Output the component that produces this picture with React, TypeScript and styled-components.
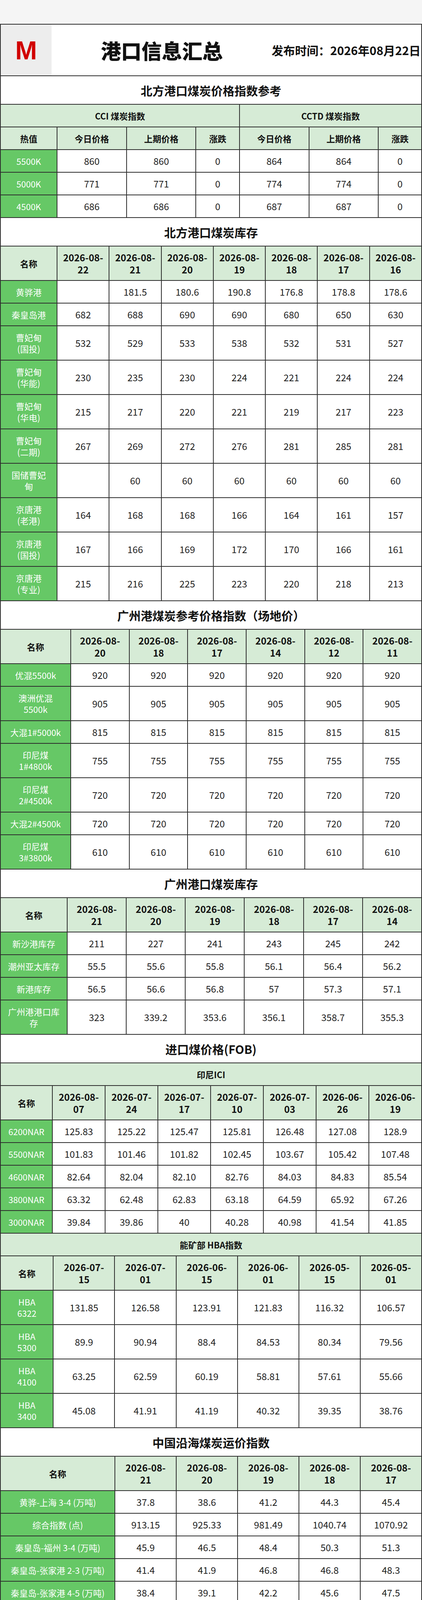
import React from "react";
import styled, { createGlobalStyle, css } from "styled-components";

const GlobalStyle = createGlobalStyle`
  html, body {
    margin: 0;
    background: #f5f5f5;
  }
  body {
    font-family: "Noto Sans CJK SC", "Noto Sans", sans-serif;
    color: #1a1a1a;
  }
`;

const Page = styled.div`
  padding: 61px 0;
`;

const Sheet = styled.div`
  display: flex;
  flex-direction: column;
  gap: 2px;
  padding: 2px;
  background: #2e2e2e;
`;

const Header = styled.header`
  display: flex;
  align-items: center;
  height: 130px;
  background: #fff;
  overflow: hidden;
  white-space: nowrap;
`;

const Logo = styled.div`
  display: flex;
  align-items: center;
  justify-content: center;
  flex: none;
  width: 130px;
  height: 100%;
  background: #ededed;
  color: #d10000;
  font: 700 67px "Liberation Sans", Arial, sans-serif;
`;

const MainTitle = styled.h1`
  margin: 0 0 0 126px;
  font-size: 52px;
  font-weight: 900;
  color: #111;
`;

const PublishDate = styled.div`
  margin-left: 125px;
  font-size: 30px;
  font-weight: 700;
  color: #111;
`;

const SectionTitle = styled.h2`
  display: flex;
  align-items: center;
  justify-content: center;
  height: 71px;
  margin: 0;
  background: #fff;
  font-size: 30px;
  font-weight: 700;
  color: #111;
`;

const SectionBar = styled.div`
  display: flex;
  height: 71px;
  background: #fff;
  overflow: hidden;
`;

const SectionText = styled(SectionTitle)`
  flex: 1;
`;

const SourceNote = styled.span`
  align-self: flex-start;
  margin-top: 3px;
  font-size: 17px;
  line-height: 1.2;
  color: #666;
  white-space: nowrap;
`;

const Grid = styled.div<{ $cols: string }>`
  display: grid;
  grid-template-columns: ${(p) => p.$cols};
  gap: 2px;
`;

type Tone = "head" | "date" | "name" | "data";

const tones = {
  head: css`
    background: #d6ebd6;
    font-size: 22px;
    font-weight: 700;
    color: #111;
  `,
  date: css`
    background: #d6ebd6;
    font-size: 24px;
    font-weight: 700;
    color: #111;
  `,
  name: css`
    background: #66c866;
    font-size: 22px;
    color: #fff;
    padding: 0 4px;
  `,
  data: css`
    background: #fff;
    font-size: 24px;
    color: #1f1f1f;
  `,
};

const Cell = styled.div<{ $tone: Tone; $tall?: boolean; $span?: number }>`
  display: flex;
  align-items: center;
  justify-content: center;
  min-width: 0;
  height: ${(p) => (p.$tall ? 86 : 56)}px;
  overflow: hidden;
  text-align: center;
  line-height: 1.3;
  white-space: pre-line;
  grid-column: ${(p) => (p.$span ? `span ${p.$span}` : "auto")};
  ${(p) => tones[p.$tone]}
`;

const Footnote = styled.div`
  height: 56px;
  padding: 0 18px;
  background: #66c866;
  color: #fff;
  font-size: 20px;
  line-height: 28px;
  text-align: center;
  overflow: hidden;
`;

type Row = { name: string; values: (string | number)[] };

type TableProps = {
  cols: string;
  dates: string[];
  rows: Row[];
  wrap?: boolean;
  band?: string;
};

const DataTable = ({ cols, dates, rows, wrap = true, band }: TableProps) => (
  <Grid $cols={cols}>
    {band && (
      <Cell $tone="head" $span={dates.length + 1}>
        {band}
      </Cell>
    )}
    <Cell $tone="head" $tall={wrap}>
      名称
    </Cell>
    {dates.map((d) => (
      <Cell key={d} $tone="date" $tall={wrap}>
        {wrap ? d.replace(/-(\d+)$/, "-\n$1") : d}
      </Cell>
    ))}
    {rows.map((r) => {
      const tall = r.name.includes("\n");
      return (
        <React.Fragment key={r.name}>
          <Cell $tone="name" $tall={tall}>
            {r.name}
          </Cell>
          {r.values.map((v, i) => (
            <Cell key={i} $tone="data" $tall={tall}>
              {v}
            </Cell>
          ))}
        </React.Fragment>
      );
    })}
  </Grid>
);

const cci = [
  ["5500K", 860, 860, 0, 864, 864, 0],
  ["5000K", 771, 771, 0, 774, 774, 0],
  ["4500K", 686, 686, 0, 687, 687, 0],
];

const northStock: Row[] = [
  { name: "黄骅港", values: ["", 181.5, 180.6, 190.8, 176.8, 178.8, 178.6] },
  { name: "秦皇岛港", values: [682, 688, 690, 690, 680, 650, 630] },
  { name: "曹妃甸\n(国投)", values: [532, 529, 533, 538, 532, 531, 527] },
  { name: "曹妃甸\n(华能)", values: [230, 235, 230, 224, 221, 224, 224] },
  { name: "曹妃甸\n(华电)", values: [215, 217, 220, 221, 219, 217, 223] },
  { name: "曹妃甸\n(二期)", values: [267, 269, 272, 276, 281, 285, 281] },
  { name: "国储曹妃\n甸", values: ["", 60, 60, 60, 60, 60, 60] },
  { name: "京唐港\n(老港)", values: [164, 168, 168, 166, 164, 161, 157] },
  { name: "京唐港\n(国投)", values: [167, 166, 169, 172, 170, 166, 161] },
  { name: "京唐港\n(专业)", values: [215, 216, 225, 223, 220, 218, 213] },
];

const six = (v: number) => Array(6).fill(v);

const gzPrice: Row[] = [
  { name: "优混5500k", values: six(920) },
  { name: "澳洲优混\n5500k", values: six(905) },
  { name: "大混1#5000k", values: six(815) },
  { name: "印尼煤\n1#4800k", values: six(755) },
  { name: "印尼煤\n2#4500k", values: six(720) },
  { name: "大混2#4500k", values: six(720) },
  { name: "印尼煤\n3#3800k", values: six(610) },
];

const gzStock: Row[] = [
  { name: "新沙港库存", values: [211, 227, 241, 243, 245, 242] },
  { name: "潮州亚太库存", values: [55.5, 55.6, 55.8, 56.1, 56.4, 56.2] },
  { name: "新港库存", values: [56.5, 56.6, 56.8, 57, 57.3, 57.1] },
  { name: "广州港港口库\n存", values: [323, 339.2, 353.6, 356.1, 358.7, 355.3] },
];

const ici: Row[] = [
  { name: "6200NAR", values: ["125.83", "125.22", "125.47", "125.81", "126.48", "127.08", "128.9"] },
  { name: "5500NAR", values: ["101.83", "101.46", "101.82", "102.45", "103.67", "105.42", "107.48"] },
  { name: "4600NAR", values: ["82.64", "82.04", "82.10", "82.76", "84.03", "84.83", "85.54"] },
  { name: "3800NAR", values: ["63.32", "62.48", "62.83", "63.18", "64.59", "65.92", "67.26"] },
  { name: "3000NAR", values: ["39.84", "39.86", "40", "40.28", "40.98", "41.54", "41.85"] },
];

const hba: Row[] = [
  { name: "HBA\n6322", values: ["131.85", "126.58", "123.91", "121.83", "116.32", "106.57"] },
  { name: "HBA\n5300", values: ["89.9", "90.94", "88.4", "84.53", "80.34", "79.56"] },
  { name: "HBA\n4100", values: ["63.25", "62.59", "60.19", "58.81", "57.61", "55.66"] },
  { name: "HBA\n3400", values: ["45.08", "41.91", "41.19", "40.32", "39.35", "38.76"] },
];

const coastal: Row[] = [
  { name: "黄骅-上海 3-4 (万吨)", values: ["37.8", "38.6", "41.2", "44.3", "45.4"] },
  { name: "综合指数 (点)", values: ["913.15", "925.33", "981.49", "1040.74", "1070.92"] },
  { name: "秦皇岛-福州 3-4 (万吨)", values: ["45.9", "46.5", "48.4", "50.3", "51.3"] },
  { name: "秦皇岛-张家港 2-3 (万吨)", values: ["41.4", "41.9", "46.8", "46.8", "48.3"] },
  { name: "秦皇岛-张家港 4-5 (万吨)", values: ["38.4", "39.1", "42.2", "45.6", "47.5"] },
  { name: "秦皇岛-广州 5-6 (万吨)", values: ["50.6", "51", "52.7", "54.8", "56.2"] },
  { name: "秦皇岛-广州 6-7 (万吨)", values: ["45.2", "45.3", "47.4", "49.4", "50.5"] },
  { name: "秦皇岛-宁波 1.5-2(万吨)", values: ["50.2", "50.5", "53.0", "55.4", "56.4"] },
  { name: "秦皇岛-厦门 5-6 (万吨)", values: ["47.1", "48", "49.4", "51.1", "52.2"] },
  { name: "秦皇岛-南京 3-4(万吨)", values: ["45.6", "45.9", "48.6", "51.6", "53.1"] },
  { name: "秦皇岛-上海 4-5 (万吨)", values: ["37.0", "37.5", "40.5", "43.8", "45.3"] },
  { name: "天津-镇江 1-1.5 (万吨)", values: ["61.9", "62.5", "64.2", "65.8", "66.4"] },
  { name: "天津-镇江 2-3 (万吨)", values: ["43.0", "43.7", "46.3", "48.6", "49.7"] },
  { name: "天津-上海 2-3 (万吨)", values: ["40.1", "41.0", "43.5", "45.9", "47.0"] },
  { name: "京唐/曹妃甸-宁波 4-5(万\n吨)", values: ["38.8", "39.2", "42.0", "45.1", "46.7"] },
];

const yangtze: Row[] = [
  { name: "镇江/南京-武汉", values: ["36.00", "29.00", "33.60", "29.00", "32.00"] },
  { name: "镇江/南京-九江", values: ["23.49", "21.95", "23.01", "21.95", "24.78"] },
  { name: "荆州-黄石", values: ["10.90", "19.60", "10.90", "19.60", "10.90"] },
  { name: "荆州-九江", values: ["24.00", "24.00", "24.00", "24.00", "24.00"] },
  { name: "综合运价指数", values: ["956.84", "1006.73", "967.75", "1086.17", "1187.50"] },
  { name: "张家港/江阴/太仓-岳阳", values: ["30.18", "34.54", "31.28", "34.54", "35.31"] },
  { name: "张家港/江阴/太仓-九江", values: ["18.26", "21.81", "19.99", "21.81", "23.08"] },
  { name: "张家港/江阴-黄石", values: ["15.89", "20.50", "22.20", "20.50", "27.65"] },
  { name: "张家港/江阴-铜陵", values: ["16.00", "15.25", "16.43", "15.25", "20.75"] },
  { name: "张家港/江阴-武汉", values: ["24.83", "28.33", "25.33", "28.33", "29.04"] },
  { name: "张家港/太仓-重庆", values: ["57.50", "61.50", "61.00", "61.50", "61.50"] },
  { name: "张家港/太仓-荆州", values: ["37.10", "42.53", "38.92", "42.53", "44.08"] },
  { name: "张家港/太仓-芜湖", values: ["16.50", "15.80", "16.50", "15.80", "17.80"] },
];

const plants: Row[] = [
  { name: "库存", values: ["1413.6", "1411.3", "1402.4", "1406.6", "1404.5", "1408.3"] },
  { name: "日耗", values: ["94.77", "90.93", "93.08", "94.87", "94.74", "92.68"] },
  { name: "可用天\n数", values: ["14.9", "15.5", "15", "14.8", "14.8", "15.1"] },
];

const days = (prefix: string, list: string[]) => list.map((d) => `${prefix}${d}`);

const App = () => {
  return (
    <Page>
      <GlobalStyle />
      <Sheet>
        <Header>
          <Logo>M</Logo>
          <MainTitle>港口信息汇总</MainTitle>
          <PublishDate>发布时间：2026年08月22日</PublishDate>
        </Header>

        <SectionTitle>北方港口煤炭价格指数参考</SectionTitle>
        <Grid $cols="145fr 178fr 178fr 111fr 178fr 178fr 110fr">
          <Cell $tone="head" $span={4}>
            CCI 煤炭指数
          </Cell>
          <Cell $tone="head" $span={3}>
            CCTD 煤炭指数
          </Cell>
          {["热值", "今日价格", "上期价格", "涨跌", "今日价格", "上期价格", "涨跌"].map((h, i) => (
            <Cell key={i} $tone="head">
              {h}
            </Cell>
          ))}
          {cci.map((row) =>
            row.map((v, i) => (
              <Cell key={`${row[0]}-${i}`} $tone={i === 0 ? "name" : "data"}>
                {v}
              </Cell>
            ))
          )}
        </Grid>

        <SectionTitle>北方港口煤炭库存</SectionTitle>
        <DataTable
          cols="145fr repeat(7, 133fr)"
          dates={days("2026-08-", ["22", "21", "20", "19", "18", "17", "16"])}
          rows={northStock}
        />

        <SectionTitle>广州港煤炭参考价格指数（场地价）</SectionTitle>
        <DataTable
          cols="181fr repeat(6, 150fr)"
          dates={days("2026-08-", ["20", "18", "17", "14", "12", "11"])}
          rows={gzPrice}
        />

        <SectionTitle>广州港口煤炭库存</SectionTitle>
        <DataTable
          cols="171fr repeat(6, 151fr)"
          dates={days("2026-08-", ["21", "20", "19", "18", "17", "14"])}
          rows={gzStock}
        />

        <SectionTitle>进口煤价格(FOB)</SectionTitle>
        <DataTable
          band="印尼ICI"
          cols="133fr repeat(7, 135fr)"
          dates={["2026-08-07", "2026-07-24", "2026-07-17", "2026-07-10", "2026-07-03", "2026-06-26", "2026-06-19"]}
          rows={ici}
        />
        <DataTable
          band="能矿部 HBA指数"
          cols="135fr repeat(6, 157fr)"
          dates={["2026-07-15", "2026-07-01", "2026-06-15", "2026-06-01", "2026-05-15", "2026-05-01"]}
          rows={hba}
        />

        <SectionTitle>中国沿海煤炭运价指数</SectionTitle>
        <DataTable
          cols="295fr repeat(5, 157fr)"
          dates={days("2026-08-", ["21", "20", "19", "18", "17"])}
          rows={coastal}
        />

        <SectionBar>
          <SectionText>中国长江煤炭运输运价(元/吨)、指数</SectionText>
          <SourceNote>数据来源：上海航运交易所</SourceNote>
        </SectionBar>
        <DataTable
          wrap={false}
          cols="268fr repeat(5, 162fr)"
          dates={["2026-08-21", "2026-08-14", "2026-08-07", "2026-07-24", "2026-07-17"]}
          rows={yangtze}
        />

        <SectionBar>
          <SectionText>六大电厂库存</SectionText>
          <SourceNote>数据来源：武汉航运交易所</SourceNote>
        </SectionBar>
        <DataTable
          cols="120fr repeat(6, 160fr)"
          dates={days("2026-08-", ["21", "20", "19", "18", "17", "14"])}
          rows={plants}
        />

        <Footnote>
          备注：以上价格仅供参考，来源于网络及贸易商搜集，具体执行价格以码头价格函为准！本公众号提供价格不作为最终价格，任何以本公众号提供的数据、信息作出决策与公众号：煤炭数据一点通无关 风险自担。
        </Footnote>
      </Sheet>
    </Page>
  );
};

export default App;
